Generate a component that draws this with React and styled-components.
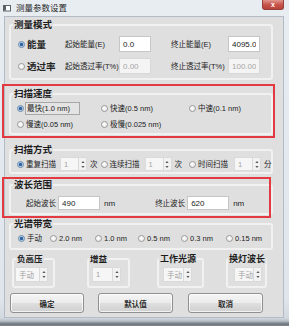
import React from "react";
import styled, { createGlobalStyle } from "styled-components";

const FONT = `"Liberation Sans", "Noto Sans CJK SC", sans-serif`;

const Global = createGlobalStyle`
  html, body { margin: 0; padding: 0; background: #ffffff; }
  body { font-family: ${FONT}; }
  * { box-sizing: border-box; }
`;

const Window = styled.div`
  width: 289px;
  height: 326px;
  overflow: hidden;
  display: flex;
  flex-direction: column;
  background: linear-gradient(
    to bottom,
    #e8edf2 0px,
    #dfe5eb 300px,
    #d3d9df 318px,
    #b9bfc6 321px,
    #6d737b 324px,
    #858b93 326px
  );
  font-family: ${FONT};
  color: #222;
`;

const TitleBar = styled.div`
  height: 16px;
  flex: none;
  display: flex;
  align-items: center;
  padding-left: 3px;
`;

const TitleText = styled.span`
  margin-left: 5px;
  font-size: 8.5px;
  line-height: 16px;
  color: #2a2a2a;
`;

const CloseButton = styled.div`
  margin-left: auto;
  margin-right: 5px;
  align-self: flex-start;
  width: 22px;
  height: 10px;
  border: 1px solid #93413a;
  border-top: none;
  border-radius: 0 0 3px 3px;
  background: linear-gradient(#e0968e, #c8564b 50%, #b8423a);
  color: #fff;
  font-size: 7px;
  font-weight: bold;
  display: flex;
  align-items: center;
  justify-content: center;
  line-height: 1;
`;

const Client = styled.div`
  margin-left: 4px;
  width: 280px;
  background: #dfdfdf;
  border: 1px solid #b3bcc6;
  padding: 3px 10px 4px 4px;
`;

const Marked = styled.div`
  position: relative;
  margin-top: ${(p) => p.$mt || 0}px;
  &::after {
    content: "";
    position: absolute;
    top: ${(p) => p.$t}px;
    left: ${(p) => p.$l}px;
    right: ${(p) => p.$r}px;
    bottom: ${(p) => p.$b}px;
    border: 2px solid #e23a40;
    pointer-events: none;
  }
`;

const Group = styled.fieldset`
  margin: ${(p) => p.$mt || 0}px 0 0 ${(p) => p.$ml || 0}px;
  padding: 0;
  min-width: 0;
  width: ${(p) => (p.$w ? `${p.$w}px` : "auto")};
  border: 2px solid #f1f1f1;
  border-radius: 3px;
`;

const Legend = styled.legend`
  margin-left: ${(p) => (p.$ml === undefined ? 2 : p.$ml)}px;
  padding: 0 1px;
  font-size: ${(p) => p.$size || 9.5}px;
  font-weight: bold;
  line-height: 10px;
  color: #1c1c1c;
  white-space: nowrap;
`;

const ModeGrid = styled.div`
  display: grid;
  grid-template-columns: 47px 54px 32px 77px 32px;
  grid-auto-rows: 16px;
  row-gap: 6px;
  align-items: center;
  padding: 6px 0 4px 7px;
`;

const SpeedGrid = styled.div`
  display: grid;
  grid-template-columns: 84px 88px auto;
  grid-auto-rows: 14px;
  row-gap: 2px;
  align-items: center;
  padding: 2px 0 2px 6px;
`;

const BandGrid = styled.div`
  display: grid;
  grid-template-columns: 32px 45px 43px 43px 45px auto;
  height: 14px;
  align-items: center;
  padding: 2px 0 3px 7px;
  box-sizing: content-box;
`;

const FlowRow = styled.div`
  display: flex;
  align-items: center;
  height: ${(p) => p.$h || 14}px;
  box-sizing: content-box;
  padding: ${(p) => p.$pad};
`;

const Label = styled.span`
  font-size: ${(p) => p.$size || 8}px;
  font-weight: ${(p) => (p.$bold ? "bold" : "normal")};
  margin-left: ${(p) => p.$ml || 0}px;
  padding-left: ${(p) => p.$pl || 0}px;
  width: ${(p) => (p.$w ? `${p.$w}px` : "auto")};
  text-align: ${(p) => p.$align || "left"};
  white-space: nowrap;
  line-height: 11px;
  color: #222;
  flex: none;
`;

const Field = styled.input`
  width: ${(p) => p.$w}px;
  height: ${(p) => p.$h || 16}px;
  margin: 0 0 0 ${(p) => p.$ml || 0}px;
  padding: 0 3px;
  border: 1px solid ${(p) => (p.disabled ? "#d8d8d8" : "#c6c6c6")};
  background: ${(p) => (p.disabled ? "#f4f4f4" : "#ffffff")};
  color: ${(p) => (p.disabled ? "#a6a6a6" : "#222")};
  font-family: ${FONT};
  font-size: 8px;
  outline: none;
  flex: none;
  &:disabled {
    color: #a6a6a6;
    -webkit-text-fill-color: #a6a6a6;
  }
`;

const RadioItem = styled.span`
  display: inline-flex;
  align-items: center;
  gap: 2px;
  margin-left: ${(p) => p.$ml || 0}px;
  flex: none;
`;

const Circle = styled.span`
  width: 7px;
  height: 7px;
  border-radius: 50%;
  flex: none;
  border: 1px solid ${(p) => (p.$on ? "#6d8aa8" : "#9a9a9a")};
  background: ${(p) =>
    p.$on
      ? "radial-gradient(circle, #2f64a0 0, #2f64a0 1.3px, #a9c6e6 2px, #eef4fa 3.5px)"
      : "radial-gradient(circle at 40% 40%, #ffffff, #e4e4e4)"};
`;

const RadioText = styled.span`
  font-size: ${(p) => p.$size || 7.5}px;
  font-weight: ${(p) => (p.$bold ? "bold" : "normal")};
  line-height: 11px;
  white-space: nowrap;
  color: #222;
  ${(p) =>
    p.$focus
      ? `border: 1px solid #a7a7a7; width: 55px; padding-left: 1px; margin-left: -1px; background: #e4e4e4;`
      : ""}
`;

const Radio = ({ on, children, ml, size, bold, focus }) => (
  <RadioItem $ml={ml}>
    <Circle $on={on} />
    <RadioText $size={size} $bold={bold} $focus={focus}>
      {children}
    </RadioText>
  </RadioItem>
);

const SpinBox = styled.span`
  display: inline-flex;
  height: ${(p) => p.$h || 14}px;
  margin-left: ${(p) => p.$ml || 0}px;
  flex: none;
`;

const SpinText = styled.span`
  width: ${(p) => p.$w}px;
  height: 100%;
  border: 1px solid #dadada;
  background: #f6f6f6;
  color: #a3a3a3;
  font-size: 7.5px;
  display: flex;
  align-items: center;
  padding-left: 3px;
`;

const SpinArrows = styled.span`
  width: 8px;
  height: 100%;
  border: 1px solid #dadada;
  border-left: none;
  background: #f2f2f2;
  display: flex;
  align-items: center;
  justify-content: center;
`;

const Spin = ({ w, value, ml, h }) => (
  <SpinBox $ml={ml} $h={h}>
    <SpinText $w={w}>{value}</SpinText>
    <SpinArrows>
      <svg width="4" height="9" viewBox="0 0 4 9">
        <path d="M2 1 L3.6 3 H0.4 Z M2 8 L3.6 6 H0.4 Z" fill="#5a5a5a" />
      </svg>
    </SpinArrows>
  </SpinBox>
);

const SmallRow = styled.div`
  display: flex;
  margin-top: 4px;
`;

const ButtonRow = styled.div`
  display: flex;
  margin-top: 5px;
`;

const Button = styled.button`
  width: ${(p) => p.$w}px;
  height: 20px;
  margin: 0 0 0 ${(p) => p.$ml || 0}px;
  padding: 0;
  border: 1px solid #8f9091;
  border-radius: 3px;
  background: linear-gradient(#f4f4f4 0%, #ececec 48%, #dedede 52%, #d0d0d0 100%);
  box-shadow: inset 0 0 0 1px rgba(255, 255, 255, 0.7);
  font-family: ${FONT};
  font-size: 7.5px;
  font-weight: bold;
  color: #2a2a2a;
`;

const AppIcon = () => (
  <svg width="8" height="8" viewBox="0 0 8 8">
    <rect x="0.5" y="1.5" width="7" height="5.5" fill="#ffffff" stroke="#5c6068" />
    <rect x="1" y="2" width="2" height="4.5" fill="#5c6068" />
  </svg>
);

export default function App() {
  return (
    <>
      <Global />
      <Window>
        <TitleBar>
          <AppIcon />
          <TitleText>测量参数设置</TitleText>
          <CloseButton>x</CloseButton>
        </TitleBar>
        <Client>
          <Group>
            <Legend>测量模式</Legend>
            <ModeGrid>
              <Radio on size={9.5} bold>
                能量
              </Radio>
              <Label $size={7.5}>起始能量(E)</Label>
              <Field $w={32} defaultValue="0.0" readOnly />
              <Label $size={7.5} $pl={20}>终止能量(E)</Label>
              <Field $w={32} defaultValue="4095.0" readOnly />
              <Radio size={9.5} bold>
                透过率
              </Radio>
              <Label $size={7.5}>起始透过率(T%)</Label>
              <Field $w={32} defaultValue="0.00" disabled />
              <Label $size={7.5} $pl={20}>终止透过率(T%)</Label>
              <Field $w={32} defaultValue="100.00" disabled />
            </ModeGrid>
          </Group>

          <Marked $mt={9} $t={-5} $l={-7} $r={-2} $b={-3}>
            <Group>
              <Legend>扫描速度</Legend>
              <SpeedGrid>
                <Radio on focus>
                  最快(1.0 nm)
                </Radio>
                <Radio>快速(0.5 nm)</Radio>
                <Radio>中速(0.1 nm)</Radio>
                <Radio>慢速(0.05 nm)</Radio>
                <Radio>极慢(0.025 nm)</Radio>
              </SpeedGrid>
            </Group>
          </Marked>

          <Group $mt={10}>
            <Legend>扫描方式</Legend>
            <FlowRow $pad="2px 0 1px 6px">
              <Radio on>重复扫描</Radio>
              <Spin w={19} value="1" ml={4} />
              <Label $size={7.5} $ml={3}>次</Label>
              <Radio ml={3}>连续扫描</Radio>
              <Spin w={19} value="1" ml={5} />
              <Label $size={7.5} $ml={3}>次</Label>
              <Radio ml={7}>时间扫描</Radio>
              <Spin w={19} value="1" ml={6} />
              <Label $size={7.5} $ml={3}>分</Label>
            </FlowRow>
          </Group>

          <Marked $mt={6} $t={-3} $l={-7} $r={2} $b={-3}>
            <Group>
              <Legend>波长范围</Legend>
              <FlowRow $pad="6px 0 3px 13px">
                <Label $size={7.5} $w={32} $align="right">
                  起始波长
                </Label>
                <Field $w={42} $h={14} $ml={2} defaultValue="490" readOnly />
                <Label $ml={4}>nm</Label>
                <Label $size={7.5} $w={32} $align="right" $ml={38}>
                  终止波长
                </Label>
                <Field $w={42} $h={14} $ml={2} defaultValue="620" readOnly />
                <Label $ml={4}>nm</Label>
              </FlowRow>
            </Group>
          </Marked>

          <Group $mt={4}>
            <Legend>光谱带宽</Legend>
            <BandGrid>
              <Radio on>手动</Radio>
              <Radio>2.0 nm</Radio>
              <Radio>1.0 nm</Radio>
              <Radio>0.5 nm</Radio>
              <Radio>0.3 nm</Radio>
              <Radio>0.15 nm</Radio>
            </BandGrid>
          </Group>

          <SmallRow>
            <Group $w={43} $ml={3}>
              <Legend $size={8.5} $ml={2}>负高压</Legend>
              <FlowRow $h={15} $pad="3px 0 4px 1px">
                <Spin w={25} value="手动" h={15} />
              </FlowRow>
            </Group>
            <Group $w={43} $ml={32}>
              <Legend $size={8.5} $ml={0}>增益</Legend>
              <FlowRow $h={15} $pad="3px 0 4px 3px">
                <Spin w={21} value="1" h={15} />
              </FlowRow>
            </Group>
            <Group $w={47} $ml={27}>
              <Legend $size={9} $ml={0}>工作光源</Legend>
              <FlowRow $h={15} $pad="3px 0 4px 4px">
                <Spin w={21} value="手动" h={15} />
              </FlowRow>
            </Group>
            <Group $w={41} $ml={22}>
              <Legend $size={9} $ml={0}>换灯波长</Legend>
              <FlowRow $h={15} $pad="3px 0 4px 6px">
                <Spin w={20} value="手动" h={15} />
              </FlowRow>
            </Group>
          </SmallRow>

          <ButtonRow>
            <Button $w={74} $ml={1}>确定</Button>
            <Button $w={75} $ml={14}>默认值</Button>
            <Button $w={75} $ml={15}>取消</Button>
          </ButtonRow>
        </Client>
      </Window>
    </>
  );
}
